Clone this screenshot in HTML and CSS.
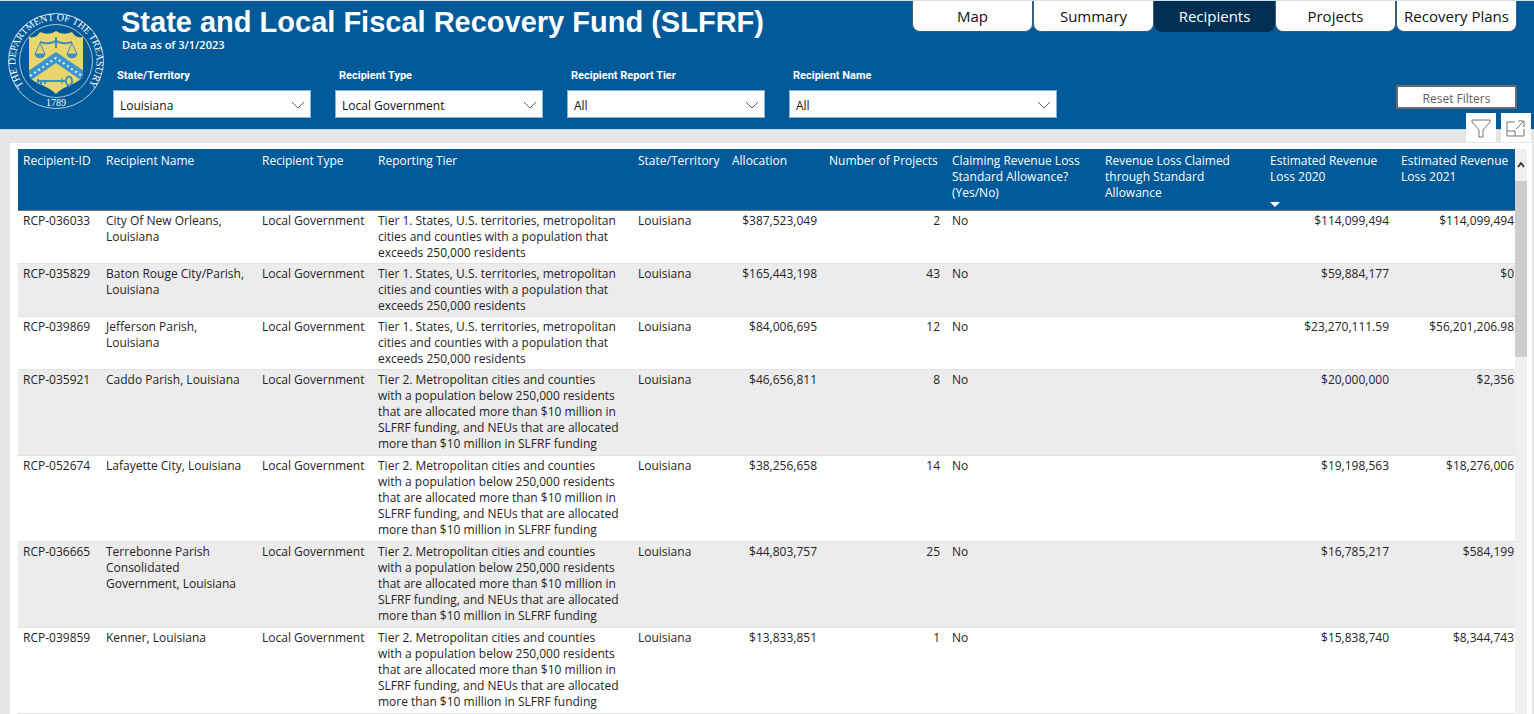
FILE: index.html
```html
<!DOCTYPE html>
<html lang="en">
<head>
<meta charset="utf-8">
<title>State and Local Fiscal Recovery Fund (SLFRF)</title>
<link rel="stylesheet" href="styles.css">
</head>
<body>
<header class="banner">
  <svg class="seal" viewBox="0 0 98 98" role="img" aria-label="Department of the Treasury seal">
    <defs>
      <path id="ring-top" d="M15.900 72.200A40.500 40.500 0 1 1 82.100 72.200"/>
      <clipPath id="shield-clip"><path d="M22 25Q29 27 33 20Q42 24 49 19Q56 24 65 20Q69 27 76 25V61C76 72 58 72 49 82C40 72 22 72 22 61Z"/></clipPath>
    </defs>
    <circle cx="49" cy="49" r="47.500" fill="none" stroke="#b9d0e2"/>
    <circle cx="49" cy="49" r="36.500" fill="none" stroke="#a9c5dc"/>
    <text class="seal-text"><textPath href="#ring-top" startOffset="50%" text-anchor="middle">THE DEPARTMENT OF THE TREASURY</textPath></text>
    <text class="seal-text" x="49" y="94" text-anchor="middle">1789</text>
    <path d="M22 25Q29 27 33 20Q42 24 49 19Q56 24 65 20Q69 27 76 25V61C76 72 58 72 49 82C40 72 22 72 22 61Z" fill="#e8d66c"/>
    <g clip-path="url(#shield-clip)">
      <path d="M20 60L49 40L78 60V71L49 51L20 71Z" fill="#3b96cc"/>
      <path d="M23 64L49 46L75 64" fill="none" stroke="#e6f2f4" stroke-width="2" stroke-dasharray="2 3"/>
    </g>
    <g fill="none" stroke="#3b8fc0">
      <path d="M33 30Q41 33 49 29Q57 33 65 30M49 25V36" stroke-width="2"/>
      <path d="M33 31L28 42M33 31L38 42M65 31L60 42M65 31L70 42"/>
      <path d="M28 42H38Q37 46 33 46Q29 46 28 42ZM60 42H70Q69 46 65 46Q61 46 60 42Z" fill="#3b8fc0"/>
      <path d="M32 69H58M34 69V73M38 69V72M31 67V72" stroke-width="2"/>
      <ellipse cx="62" cy="69" rx="3" ry="4.500" stroke-width="2"/>
      <path d="M55 66V72"/>
    </g>
  </svg>
  <div class="banner-main">
    <div class="banner-row">
      <div class="heading">
        <h1 class="title">State and Local Fiscal Recovery Fund (SLFRF)</h1>
        <p class="as-of">Data as of 3/1/2023</p>
      </div>
      <nav class="tabs">
        <button class="tab">Map</button>
        <button class="tab">Summary</button>
        <button class="tab tab-active" aria-current="page">Recipients</button>
        <button class="tab">Projects</button>
        <button class="tab">Recovery Plans</button>
      </nav>
    </div>
    <form class="banner-row controls">
      <div class="filters">
        <div class="filter">
          <label for="state">State/Territory</label>
          <div class="select-box"><select id="state"><option>Louisiana</option></select><svg class="chevron" viewBox="0 0 14 8"><path d="M1 1L7 7L13 1"/></svg></div>
        </div>
        <div class="filter filter-type">
          <label for="type">Recipient Type</label>
          <div class="select-box"><select id="type"><option>Local Government</option></select><svg class="chevron" viewBox="0 0 14 8"><path d="M1 1L7 7L13 1"/></svg></div>
        </div>
        <div class="filter">
          <label for="tier">Recipient Report Tier</label>
          <div class="select-box"><select id="tier"><option>All</option></select><svg class="chevron" viewBox="0 0 14 8"><path d="M1 1L7 7L13 1"/></svg></div>
        </div>
        <div class="filter filter-name">
          <label for="name">Recipient Name</label>
          <div class="select-box"><select id="name"><option>All</option></select><svg class="chevron" viewBox="0 0 14 8"><path d="M1 1L7 7L13 1"/></svg></div>
        </div>
      </div>
      <button class="reset" type="reset">Reset Filters</button>
    </form>
  </div>
  <div class="tools">
    <button class="tool" aria-label="Filters"><svg viewBox="0 0 20 20"><path d="M1 1H19V3L12 11V18H8V11L1 3Z"/></svg></button>
    <button class="tool" aria-label="Focus mode"><svg viewBox="0 0 20 20"><path d="M9 3H1V17H18V10M1 12H9V17M10 10L17 3M12 2H18V8"/></svg></button>
  </div>
</header>
<main class="panel">
  <div class="table-area">
    <table class="grid">
      <colgroup><col class="c-id"><col class="c-name"><col class="c-type"><col class="c-tier"><col class="c-state"><col class="c-alloc"><col class="c-count"><col class="c-claim"><col class="c-std"><col class="c-loss"><col class="c-last"></colgroup>
      <thead>
        <tr><th>Recipient-ID</th><th>Recipient Name</th><th>Recipient Type</th><th>Reporting Tier</th><th>State/Territory</th><th>Allocation</th><th>Number of Projects</th><th>Claiming Revenue Loss<br>Standard Allowance?<br>(Yes/No)</th><th>Revenue Loss Claimed<br>through Standard<br>Allowance</th><th aria-sort="descending">Estimated Revenue<br>Loss 2020<svg class="sort" viewBox="0 0 10 5"><path d="M0 0H10L5 5Z"/></svg></th><th>Estimated Revenue<br>Loss 2021</th></tr>
      </thead>
      <tbody>
        <tr><td>RCP-036033</td><td>City Of New Orleans,<br>Louisiana</td><td>Local Government</td><td>Tier 1. States, U.S. territories, metropolitan<br>cities and counties with a population that<br>exceeds 250,000 residents</td><td>Louisiana</td><td class="num">$387,523,049</td><td class="num">2</td><td>No</td><td></td><td class="num">$114,099,494</td><td class="num">$114,099,494</td></tr>
        <tr><td>RCP-035829</td><td>Baton Rouge City/Parish,<br>Louisiana</td><td>Local Government</td><td>Tier 1. States, U.S. territories, metropolitan<br>cities and counties with a population that<br>exceeds 250,000 residents</td><td>Louisiana</td><td class="num">$165,443,198</td><td class="num">43</td><td>No</td><td></td><td class="num">$59,884,177</td><td class="num">$0</td></tr>
        <tr><td>RCP-039869</td><td>Jefferson Parish,<br>Louisiana</td><td>Local Government</td><td>Tier 1. States, U.S. territories, metropolitan<br>cities and counties with a population that<br>exceeds 250,000 residents</td><td>Louisiana</td><td class="num">$84,006,695</td><td class="num">12</td><td>No</td><td></td><td class="num">$23,270,111.59</td><td class="num">$56,201,206.98</td></tr>
        <tr class="tall"><td>RCP-035921</td><td>Caddo Parish, Louisiana</td><td>Local Government</td><td>Tier 2. Metropolitan cities and counties<br>with a population below 250,000 residents<br>that are allocated more than $10 million in<br>SLFRF funding, and NEUs that are allocated<br>more than $10 million in SLFRF funding</td><td>Louisiana</td><td class="num">$46,656,811</td><td class="num">8</td><td>No</td><td></td><td class="num">$20,000,000</td><td class="num">$2,356</td></tr>
        <tr class="tall"><td>RCP-052674</td><td>Lafayette City, Louisiana</td><td>Local Government</td><td>Tier 2. Metropolitan cities and counties<br>with a population below 250,000 residents<br>that are allocated more than $10 million in<br>SLFRF funding, and NEUs that are allocated<br>more than $10 million in SLFRF funding</td><td>Louisiana</td><td class="num">$38,256,658</td><td class="num">14</td><td>No</td><td></td><td class="num">$19,198,563</td><td class="num">$18,276,006</td></tr>
        <tr class="tall"><td>RCP-036665</td><td>Terrebonne Parish<br>Consolidated<br>Government, Louisiana</td><td>Local Government</td><td>Tier 2. Metropolitan cities and counties<br>with a population below 250,000 residents<br>that are allocated more than $10 million in<br>SLFRF funding, and NEUs that are allocated<br>more than $10 million in SLFRF funding</td><td>Louisiana</td><td class="num">$44,803,757</td><td class="num">25</td><td>No</td><td></td><td class="num">$16,785,217</td><td class="num">$584,199</td></tr>
        <tr class="tall"><td>RCP-039859</td><td>Kenner, Louisiana</td><td>Local Government</td><td>Tier 2. Metropolitan cities and counties<br>with a population below 250,000 residents<br>that are allocated more than $10 million in<br>SLFRF funding, and NEUs that are allocated<br>more than $10 million in SLFRF funding</td><td>Louisiana</td><td class="num">$13,833,851</td><td class="num">1</td><td>No</td><td></td><td class="num">$15,838,740</td><td class="num">$8,344,743</td></tr>
        <tr class="tall"><td></td><td></td><td></td><td></td><td></td><td></td><td></td><td></td><td></td><td></td><td></td></tr>
      </tbody>
    </table>
  </div>
  <div class="scrollbar"><svg class="scroll-up" viewBox="0 0 8 6"><path d="M1 5L4 1L7 5"/></svg><div class="thumb"></div></div>
</main>
</body>
</html>
```
FILE: styles.css
```css
* {
  box-sizing: border-box;
}

body {
  margin: 0;
  height: 100vh;
  display: flex;
  flex-direction: column;
  overflow: hidden;
  background: #e6e6e6;
  color: #252423;
  font-family: "Open Sans", "Noto Sans", sans-serif;
  font-size: 12px;
}

button,
select {
  font-family: inherit;
  margin: 0;
}

.banner {
  position: relative;
  display: flex;
  flex: none;
  height: 130px;
  background: #005a9a;
  border-top: 1px solid #d5e0e4;
  border-bottom: 1px solid #c6d5e0;
}

.seal {
  flex: none;
  width: 98px;
  height: 98px;
  margin: 11px 8px 0 7px;
}

.seal-text {
  font-family: "Liberation Serif", serif;
  font-size: 10px;
  fill: #ffffff;
}

.banner-main {
  flex: 1;
  min-width: 0;
  padding-right: 17px;
}

.banner-row {
  display: flex;
  justify-content: space-between;
  align-items: flex-start;
}

.heading {
  padding: 5px 0 0 8px;
}

.title {
  margin: 0;
  color: #ffffff;
  font-family: "Liberation Sans", Arial, sans-serif;
  font-size: 29px;
  line-height: 32px;
  white-space: nowrap;
}

.as-of {
  margin: 0 0 0 1px;
  color: #ffffff;
  font-size: 11px;
  font-weight: 600;
  line-height: 14px;
}

.controls {
  margin: 16px 0 0;
}

.filters {
  display: flex;
  gap: 24px;
}

.filter {
  width: 198px;
}

.filter-type {
  width: 208px;
}

.filter-name {
  width: 268px;
}

.filter label {
  display: block;
  margin: 0 0 7px 4px;
  color: #ffffff;
  font-family: Roboto, sans-serif;
  font-size: 11px;
  font-weight: 700;
  line-height: 15px;
}

.select-box {
  position: relative;
}

.select-box select {
  display: block;
  width: 100%;
  height: 28px;
  padding: 2px 24px 0 6px;
  border: 1px solid #8db4d2;
  border-radius: 0;
  appearance: none;
  background: #ffffff;
  color: #111111;
  font-size: 12px;
}

.chevron {
  position: absolute;
  right: 6px;
  top: 11px;
  width: 14px;
  height: 8px;
  fill: none;
  stroke: #605e5c;
  pointer-events: none;
}

.tabs {
  display: flex;
}

.tab {
  width: 121px;
  height: 31px;
  padding: 0;
  border: 1px solid #35607f;
  border-top: 0;
  border-radius: 0 0 8px 8px;
  background: #ffffff;
  color: #111111;
  font-size: 15px;
  white-space: nowrap;
}

.tab-active {
  border-color: #002f52;
  background: #002f52;
  color: #ffffff;
}

.reset {
  width: 121px;
  height: 24px;
  margin-top: 17px;
  padding: 3px 0 0;
  border: 2px solid #6b6b6b;
  background: #ffffff;
  color: #605e5c;
  font-size: 12px;
  line-height: 16px;
}

.tools {
  position: absolute;
  right: 3px;
  bottom: -13px;
  display: flex;
  gap: 5px;
}

.tool {
  width: 30px;
  height: 29px;
  padding: 6px 5px 3px;
  border: 0;
  background: #ffffff;
}

.tool svg {
  display: block;
  width: 20px;
  height: 20px;
  fill: none;
  stroke: #747474;
}

.panel {
  display: flex;
  flex: 1;
  min-height: 0;
  margin: 13px 2px 0 10px;
  padding: 6px 5px 0 8px;
  background: #ffffff;
}

.table-area {
  flex: 1;
  overflow: hidden;
}

.grid {
  width: 100%;
  border-collapse: separate;
  border-spacing: 0;
  table-layout: fixed;
}

.c-id { width: 83px; }
.c-name { width: 156px; }
.c-type { width: 116px; }
.c-tier { width: 260px; }
.c-state { width: 94px; }
.c-alloc { width: 97px; }
.c-count { width: 123px; }
.c-claim { width: 153px; }
.c-std { width: 165px; }
.c-loss { width: 131px; }
.c-last { width: 119px; }

.grid th {
  position: relative;
  height: 62px;
  padding: 4px 0 0 5px;
  border-bottom: 1px solid #777777;
  background: #005a9a;
  color: #ffffff;
  font-weight: 400;
  line-height: 16px;
  text-align: left;
  vertical-align: top;
  white-space: nowrap;
}

.sort {
  position: absolute;
  left: 5px;
  bottom: 3px;
  width: 10px;
  height: 5px;
  fill: #ffffff;
}

.grid td {
  height: 53px;
  padding: 2px 7px 1px 5px;
  border-bottom: 1px solid #e2e2e2;
  line-height: 16px;
  vertical-align: top;
  white-space: nowrap;
}

.grid .tall td {
  height: 86px;
}

.grid tbody tr:nth-child(even) {
  background: #ececec;
}

.grid .num {
  text-align: right;
}

.grid td:last-child {
  padding-right: 1px;
}

.scrollbar {
  flex: none;
  width: 12px;
  background: #f0f0f0;
}

.scroll-up {
  display: block;
  width: 8px;
  height: 6px;
  margin: 13px auto;
  fill: none;
  stroke: #404040;
  stroke-width: 2;
}

.thumb {
  height: 176px;
  background: #cdcdcd;
}
```
